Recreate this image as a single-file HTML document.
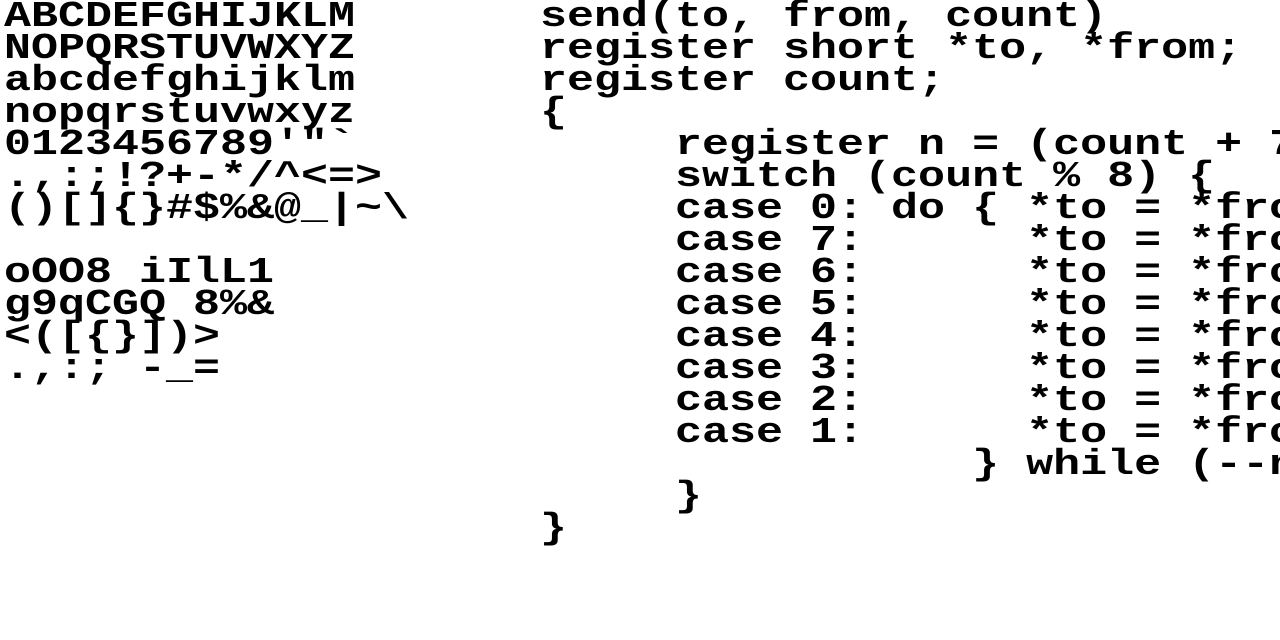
<!DOCTYPE html>
<html><head><meta charset="utf-8"><style>
html,body{margin:0;padding:0;background:#fff;width:1280px;height:640px;overflow:hidden;position:relative}
pre{position:absolute;margin:0;font-family:"Liberation Mono",monospace;font-weight:bold;font-size:36px;line-height:32px;color:#000;transform-origin:0 0;transform:scaleX(1.25);white-space:pre}
#l{left:4px;top:1px}
#r{left:540px;top:1px}
</style></head><body>
<pre id="l">ABCDEFGHIJKLM
NOPQRSTUVWXYZ
abcdefghijklm
nopqrstuvwxyz
0123456789'"`
.,:;!?+-*/^&lt;=&gt;
()[]{}#$%&amp;@_|~\

oOO8 iIlL1
g9qCGQ 8%&amp;
&lt;([{}])&gt;
.,:; -_=</pre>
<pre id="r">send(to, from, count)
register short *to, *from;
register count;
{
     register n = (count + 7
     switch (count % 8) {
     case 0: do { *to = *fro
     case 7:      *to = *fro
     case 6:      *to = *fro
     case 5:      *to = *fro
     case 4:      *to = *fro
     case 3:      *to = *fro
     case 2:      *to = *fro
     case 1:      *to = *fro
                } while (--n
     }
}</pre>
</body></html>
